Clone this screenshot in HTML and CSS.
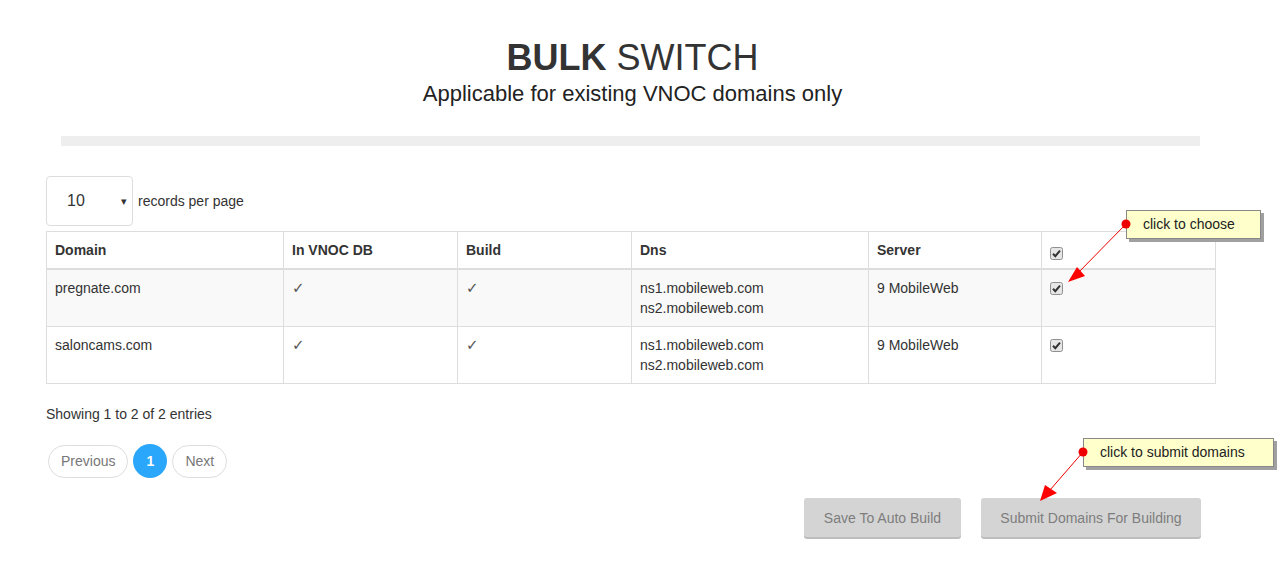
FILE: index.html
```html
<!DOCTYPE html>
<html>
<head>
<meta charset="utf-8">
<link rel="stylesheet" href="styles.css">
</head>
<body>
<div class="page">
  <header class="head">
    <h1 class="title"><b>BULK</b> SWITCH</h1>
    <p class="subtitle">Applicable for existing VNOC domains only</p>
  </header>
  <div class="bar"></div>

  <div class="length">
    <div class="select"><span class="sel-val">10</span><span class="sel-arrow">▾</span></div>
    <span class="length-label">records per page</span>
  </div>

  <table class="grid">
    <colgroup>
      <col class="c-wide"><col class="c-mid"><col class="c-mid"><col class="c-wide"><col class="c-srv"><col class="c-mid">
    </colgroup>
    <thead>
      <tr><th>Domain</th><th>In VNOC DB</th><th>Build</th><th>Dns</th><th>Server</th><th><span class="cb cb-head"><svg viewBox="0 0 13 13" width="13" height="13"><rect x="0.5" y="0.5" width="12" height="12" rx="2" fill="#e6e6e6" stroke="#8f8f8f"/><path d="M3 6.8 L5.3 9.2 L10 3.6" fill="none" stroke="#333" stroke-width="2"/></svg></span></th></tr>
    </thead>
    <tbody>
      <tr class="odd"><td>pregnate.com</td><td><span class="tick">✓</span></td><td><span class="tick">✓</span></td><td>ns1.mobileweb.com<br>ns2.mobileweb.com</td><td>9 MobileWeb</td><td><span class="cb"><svg viewBox="0 0 13 13" width="13" height="13"><rect x="0.5" y="0.5" width="12" height="12" rx="2" fill="#e6e6e6" stroke="#8f8f8f"/><path d="M3 6.8 L5.3 9.2 L10 3.6" fill="none" stroke="#333" stroke-width="2"/></svg></span></td></tr>
      <tr><td>saloncams.com</td><td><span class="tick">✓</span></td><td><span class="tick">✓</span></td><td>ns1.mobileweb.com<br>ns2.mobileweb.com</td><td>9 MobileWeb</td><td><span class="cb"><svg viewBox="0 0 13 13" width="13" height="13"><rect x="0.5" y="0.5" width="12" height="12" rx="2" fill="#e6e6e6" stroke="#8f8f8f"/><path d="M3 6.8 L5.3 9.2 L10 3.6" fill="none" stroke="#333" stroke-width="2"/></svg></span></td></tr>
    </tbody>
  </table>

  <div class="info">Showing 1 to 2 of 2 entries</div>

  <div class="pager">
    <span class="pg pg-text">Previous</span>
    <span class="pg pg-cur">1</span>
    <span class="pg pg-text">Next</span>
  </div>

  <div class="actions">
    <button class="btn btn-save">Save To Auto Build</button>
    <button class="btn btn-submit">Submit Domains For Building</button>
  </div>
</div>

<div class="note note-choose">click to choose</div>
<div class="note note-submit">click to submit domains</div>
<svg class="arrows" width="1284" height="575" viewBox="0 0 1284 575">
  <line x1="1126" y1="224" x2="1076" y2="275" stroke="#e00" stroke-width="1"/>
  <polygon points="1068,282 1077,267 1085,276" fill="#ff0000"/>
  <circle cx="1126" cy="224" r="4.5" fill="#ee0000"/>
  <line x1="1083" y1="452" x2="1050" y2="490" stroke="#e00" stroke-width="1"/>
  <polygon points="1040,501 1045,485 1057,493" fill="#ff0000"/>
  <circle cx="1083" cy="452" r="4.5" fill="#ee0000"/>
</svg>
</body>
</html>
```

FILE: styles.css
```css
html, body { margin: 0; padding: 0; background: #fff; }
body {
  font-family: "Liberation Sans", Arial, sans-serif;
  font-size: 14px;
  color: #333;
  position: relative;
  width: 1284px;
  height: 575px;
  overflow: hidden;
}
.page { padding: 0 69px 0 46px; }
.head { text-align: center; padding-top: 36px; padding-left: 4px; }
.title {
  margin: 0;
  font-size: 36px;
  line-height: 44px;
  font-weight: normal;
  color: #333;
}
.title b { font-weight: bold; }
.subtitle {
  margin: 0;
  font-size: 22px;
  line-height: 28px;
  color: #222;
}
.bar {
  margin: 28px 15px 0 15px;
  height: 10px;
  background: #eeeeee;
}
.length {
  margin-top: 30px;
  display: flex;
  align-items: center;
  gap: 5px;
}
.select {
  box-sizing: border-box;
  width: 87px;
  height: 50px;
  border: 1px solid #ddd;
  border-radius: 4px;
  display: flex;
  align-items: center;
  justify-content: space-between;
  padding: 0 5px 0 20px;
}
.sel-val { font-size: 16px; color: #333; }
.sel-arrow { font-size: 11px; color: #333; }
.length-label { color: #333; margin-top: -1px; }
.grid {
  margin-top: 5px;
  width: 1169px;
  border-collapse: collapse;
  table-layout: fixed;
}
.c-wide { width: 237px; }
.c-mid { width: 174px; }
.c-srv { width: 173px; }
.grid th, .grid td {
  border: 1px solid #ddd;
  padding: 8px 8px;
  line-height: 20px;
  text-align: left;
  vertical-align: top;
}
.grid th {
  font-weight: bold;
  border-bottom: 2px solid #ddd;
  color: #333;
}
.grid tr.odd td { background: #f9f9f9; }
.tick { font-family: "DejaVu Sans", sans-serif; font-size: 15px; color: #555; }
.cb { display: inline-block; width: 13px; height: 13px; vertical-align: middle; margin-top: -2px; }
.cb-head { vertical-align: -5px; margin-top: 0; }
.cb svg { display: block; }
.info { margin-top: 20px; line-height: 20px; }
.pager {
  margin-top: 20px;
  display: flex;
  align-items: center;
  gap: 5px;
  padding-left: 2px;
}
.pg {
  box-sizing: border-box;
  height: 33px;
  display: inline-flex;
  align-items: center;
  justify-content: center;
  border-radius: 17px;
}
.pg-text {
  border: 1px solid #ddd;
  color: #777;
  padding: 0 12px;
}
.pg-cur {
  width: 34px;
  height: 34px;
  background: #2aa6fb;
  color: #fff;
  font-weight: bold;
}
.actions {
  margin-top: 20px;
  display: flex;
  justify-content: flex-end;
  gap: 20px;
  padding-right: 14px;
}
.btn {
  font-family: "Liberation Sans", Arial, sans-serif;
  font-size: 14px;
  color: #7d7d7d;
  background: #d4d4d4;
  border: 0;
  border-radius: 3px;
  height: 39px;
  padding: 0 18px;
  box-shadow: 0 2px 0 #bdbdbd;
}
.btn-save { width: 157px; }
.btn-submit { width: 220px; }
.note {
  position: absolute;
  box-sizing: border-box;
  background: #ffffcc;
  border: 1px solid #888;
  box-shadow: 3px 3px 0 #a0a0a0;
  color: #222;
  font-size: 14px;
  line-height: 27px;
  padding-left: 16px;
}
.note-choose { left: 1126px; top: 210px; width: 135px; height: 29px; }
.note-submit { left: 1083px; top: 438px; width: 191px; height: 29px; }
.arrows { position: absolute; left: 0; top: 0; pointer-events: none; }
```
